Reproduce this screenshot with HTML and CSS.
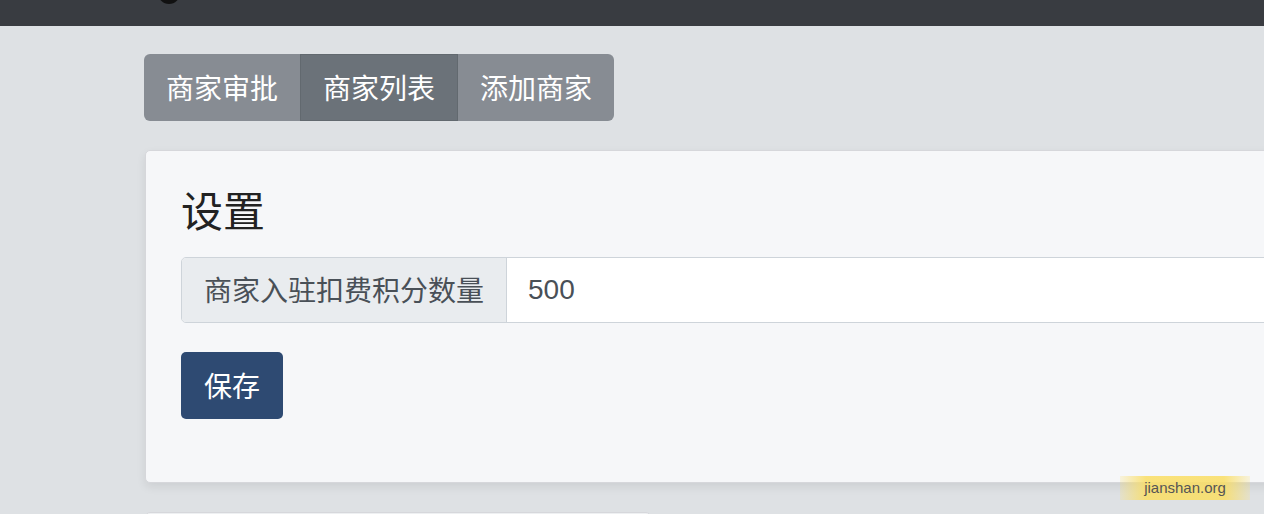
FILE: index.html
```html
<!DOCTYPE html>
<html lang="zh-CN">
<head>
    <meta charset="UTF-8">
    <meta name="viewport" content="width=device-width, initial-scale=1.0">
    <title>商家设置</title>
    <link rel="stylesheet" href="styles.css">
</head>
<body>
    <nav class="navbar">
        <span class="brand-dot"></span>
    </nav>

    <div class="container">
        <div class="btn-group">
            <a class="tab">商家审批</a>
            <a class="tab active">商家列表</a>
            <a class="tab">添加商家</a>
        </div>

        <div class="card">
            <h3>设置</h3>
            <div class="input-group">
                <span class="input-label">商家入驻扣费积分数量</span>
                <input type="text" class="input-field" value="500">
            </div>
            <button class="btn-save">保存</button>
        </div>

        <div class="card card-next"></div>
    </div>

    <div class="watermark">jianshan.org</div>
</body>
</html>
```

FILE: styles.css
```css
html, body {
    margin: 0;
    padding: 0;
    height: 100%;
    overflow: hidden;
}

body {
    font-family: "Liberation Sans", "Noto Sans CJK SC", sans-serif;
    background: #dee1e4;
    color: #212529;
}

.navbar {
    height: 26px;
    background: #393c41;
    position: relative;
    overflow: hidden;
}

.brand-dot {
    position: absolute;
    left: 158px;
    top: -18px;
    width: 22px;
    height: 22px;
    border-radius: 50%;
    background: #111;
}

.container {
    width: 1400px;
    margin-left: 144px;
    padding-top: 28px;
}

.btn-group {
    display: inline-flex;
    border-radius: 6px;
    overflow: hidden;
}

.tab {
    display: block;
    height: 67px;
    line-height: 63px;
    padding: 4px 22px 0;
    font-size: 28px;
    color: #fff;
    background: #878c93;
    box-sizing: border-box;
    width: 156px;
    text-align: center;
}

.tab.active {
    background: #6b7279;
    border: 1px solid #62696f;
    line-height: 61px;
    width: 158px;
}

.card {
    margin-top: 29px;
    margin-left: 1px;
    background: #f6f7f9;
    border: 1px solid #d6d7db;
    border-radius: 5px;
    padding: 37px 35px 63px;
    box-shadow: 0 4px 10px rgba(0, 0, 0, 0.08);
}

.card h3 {
    margin: 0 0 19px;
    font-size: 42px;
    font-weight: 400;
    line-height: 50px;
    color: #222;
}

.input-group {
    display: flex;
    height: 66px;
    border: 1px solid #ced4da;
    border-radius: 5px;
    overflow: hidden;
    box-sizing: border-box;
}

.input-label {
    display: flex;
    align-items: center;
    padding: 0 22px 3px;
    background: #e9ecef;
    border-right: 1px solid #ced4da;
    font-size: 28px;
    color: #495057;
    white-space: nowrap;
}

.input-field {
    flex: 1;
    border: none;
    background: #fff;
    padding: 0 21px;
    font-family: inherit;
    font-size: 28px;
    color: #495057;
    outline: none;
}

.btn-save {
    margin-top: 29px;
    height: 67px;
    width: 102px;
    border: none;
    border-radius: 5px;
    background: #2e4a72;
    color: #fff;
    font-family: inherit;
    font-size: 28px;
    padding: 0 0 2px;
}

.card-next {
    width: 504px;
    height: 40px;
    padding: 0;
    background: #eef0f2;
    box-shadow: none;
}

.watermark {
    position: absolute;
    left: 1120px;
    top: 476px;
    width: 130px;
    height: 24px;
    line-height: 24px;
    text-align: center;
    font-size: 15px;
    color: #555;
    background: linear-gradient(90deg, rgba(250, 222, 110, 0.2), rgba(250, 222, 100, 0.85) 20%, rgba(250, 222, 100, 0.85) 80%, rgba(250, 222, 110, 0.2));
}
```
